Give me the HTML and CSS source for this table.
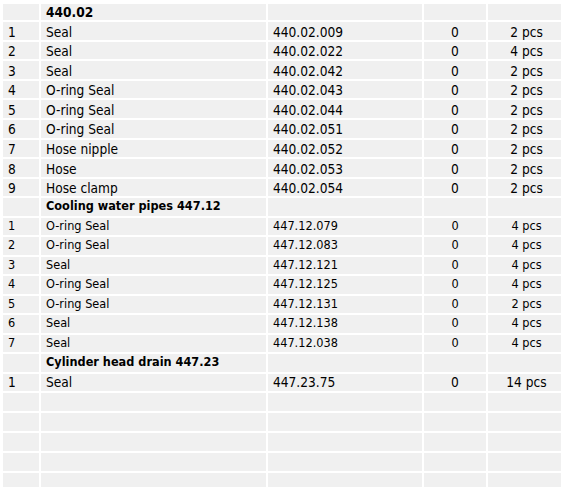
FILE: index.html
```html
<!DOCTYPE html>
<html>
<head>
<meta charset="utf-8">
<link rel="stylesheet" href="styles.css">
</head>
<body>
<table class="parts">
  <colgroup>
    <col class="c-pos"><col class="c-name"><col class="c-no"><col class="c-stock"><col class="c-qty">
  </colgroup>
  <tbody class="big">
    <tr class="head"><td></td><td>440.02</td><td></td><td></td><td></td></tr>
    <tr><td>1</td><td>Seal</td><td>440.02.009</td><td class="ctr">0</td><td class="ctr">2 pcs</td></tr>
    <tr><td>2</td><td>Seal</td><td>440.02.022</td><td class="ctr">0</td><td class="ctr">4 pcs</td></tr>
    <tr><td>3</td><td>Seal</td><td>440.02.042</td><td class="ctr">0</td><td class="ctr">2 pcs</td></tr>
    <tr><td>4</td><td>O-ring Seal</td><td>440.02.043</td><td class="ctr">0</td><td class="ctr">2 pcs</td></tr>
    <tr><td>5</td><td>O-ring Seal</td><td>440.02.044</td><td class="ctr">0</td><td class="ctr">2 pcs</td></tr>
    <tr><td>6</td><td>O-ring Seal</td><td>440.02.051</td><td class="ctr">0</td><td class="ctr">2 pcs</td></tr>
    <tr><td>7</td><td>Hose nipple</td><td>440.02.052</td><td class="ctr">0</td><td class="ctr">2 pcs</td></tr>
    <tr><td>8</td><td>Hose</td><td>440.02.053</td><td class="ctr">0</td><td class="ctr">2 pcs</td></tr>
    <tr><td>9</td><td>Hose clamp</td><td>440.02.054</td><td class="ctr">0</td><td class="ctr">2 pcs</td></tr>
  </tbody>
  <tbody class="small">
    <tr class="head"><td></td><td>Cooling water pipes 447.12</td><td></td><td></td><td></td></tr>
    <tr><td>1</td><td>O-ring Seal</td><td>447.12.079</td><td class="ctr">0</td><td class="ctr">4 pcs</td></tr>
    <tr><td>2</td><td>O-ring Seal</td><td>447.12.083</td><td class="ctr">0</td><td class="ctr">4 pcs</td></tr>
    <tr><td>3</td><td>Seal</td><td>447.12.121</td><td class="ctr">0</td><td class="ctr">4 pcs</td></tr>
    <tr><td>4</td><td>O-ring Seal</td><td>447.12.125</td><td class="ctr">0</td><td class="ctr">4 pcs</td></tr>
    <tr><td>5</td><td>O-ring Seal</td><td>447.12.131</td><td class="ctr">0</td><td class="ctr">2 pcs</td></tr>
    <tr><td>6</td><td>Seal</td><td>447.12.138</td><td class="ctr">0</td><td class="ctr">4 pcs</td></tr>
    <tr><td>7</td><td>Seal</td><td>447.12.038</td><td class="ctr">0</td><td class="ctr">4 pcs</td></tr>
    <tr class="head"><td></td><td>Cylinder head drain 447.23</td><td></td><td></td><td></td></tr>
  </tbody>
  <tbody class="last">
    <tr><td>1</td><td>Seal</td><td>447.23.75</td><td class="ctr">0</td><td class="ctr">14 pcs</td></tr>
  </tbody>
  <tbody class="empty">
    <tr><td></td><td></td><td></td><td></td><td></td></tr>
    <tr><td></td><td></td><td></td><td></td><td></td></tr>
    <tr><td></td><td></td><td></td><td></td><td></td></tr>
    <tr><td></td><td></td><td></td><td></td><td></td></tr>
    <tr><td></td><td></td><td></td><td></td><td></td></tr>
  </tbody>
</table>
</body>
</html>
```

FILE: styles.css
```css
html, body {
  margin: 0;
  padding: 0;
  background: #ffffff;
  overflow: hidden;
}

.parts {
  margin: 2px 0 0 1px;
  border-collapse: separate;
  border-spacing: 2px;
  table-layout: fixed;
  width: 564px;
  font-family: "DejaVu Sans Condensed", "DejaVu Sans", sans-serif;
  font-stretch: condensed;
  color: #000000;
}

.c-pos { width: 36px; }
.c-name { width: 225px; }
.c-no { width: 154px; }
.c-stock { width: 62px; }
.c-qty { width: 77px; }

.parts td {
  background: #f0f0f0;
  padding: 0 5px;
  white-space: nowrap;
  overflow: hidden;
  vertical-align: middle;
}

.parts td.ctr {
  text-align: center;
}

.big td {
  font-size: 13.6px;
  padding-top: 1.5px;
  height: 16.1px;
  line-height: 16.1px;
}

.small td {
  font-size: 12.6px;
  padding-bottom: 1.5px;
  height: 16px;
  line-height: 16px;
}

.last td {
  font-size: 13.6px;
  padding-bottom: 1px;
  height: 16.6px;
  line-height: 16.6px;
}

.head td {
  font-weight: bold;
}

.big .head td {
  padding-top: 1px;
  height: 15px;
  line-height: 15px;
}

.empty td {
  height: 18px;
}
```
